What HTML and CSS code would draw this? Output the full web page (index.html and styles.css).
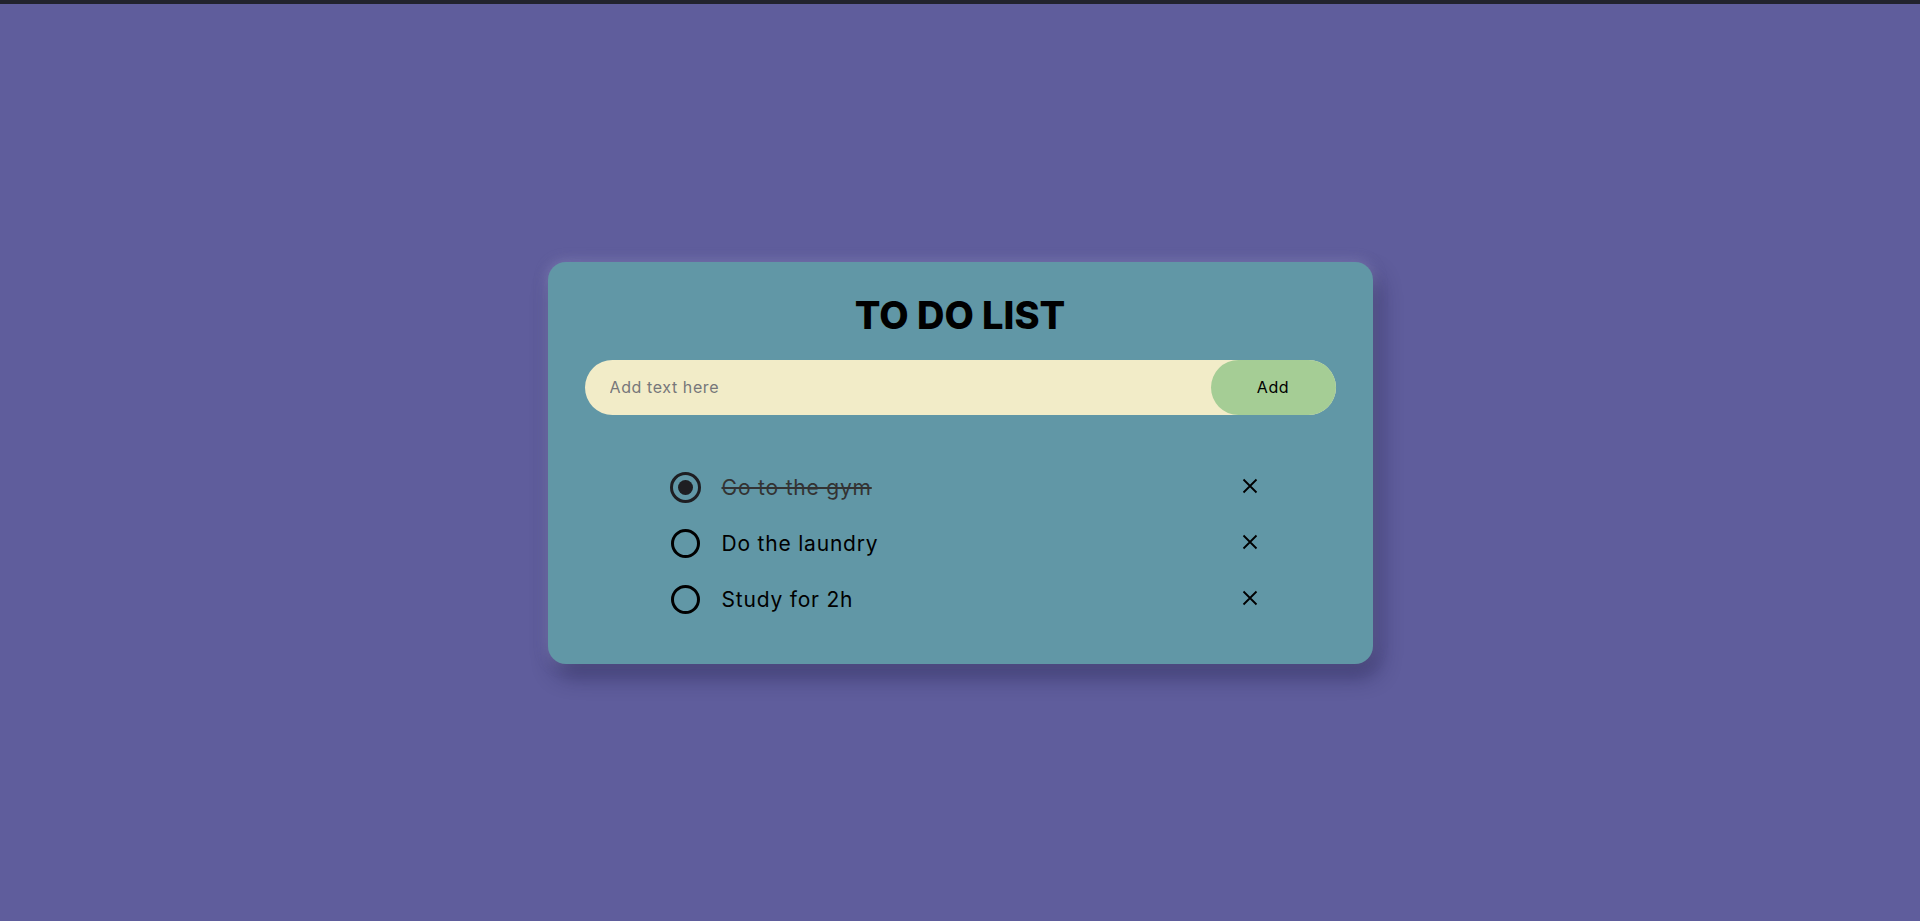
FILE: index.html
```html
<!DOCTYPE html>
<html lang="en">
<head>
<meta charset="utf-8">
<title>To Do List</title>
<link rel="stylesheet" href="styles.css">
</head>
<body>
<div class="topbar"></div>
<main class="stage">
  <section class="card">
    <h1 class="title">TO DO LIST</h1>
    <div class="entry">
      <input class="entry-input" type="text" placeholder="Add text here">
      <button class="entry-btn" type="button">Add</button>
    </div>
    <ul class="tasks">
      <li class="task done">
        <span class="check"><span class="dot"></span></span>
        <span class="task-text">Go to the gym</span>
        <span class="remove"><svg viewBox="0 0 16 16" width="16" height="16"><path d="M1.5 1.5 L14.5 14.5 M14.5 1.5 L1.5 14.5" stroke="#000" stroke-width="1.8" fill="none"/></svg></span>
      </li>
      <li class="task">
        <span class="check"></span>
        <span class="task-text">Do the laundry</span>
        <span class="remove"><svg viewBox="0 0 16 16" width="16" height="16"><path d="M1.5 1.5 L14.5 14.5 M14.5 1.5 L1.5 14.5" stroke="#000" stroke-width="1.8" fill="none"/></svg></span>
      </li>
      <li class="task">
        <span class="check"></span>
        <span class="task-text">Study for 2h</span>
        <span class="remove"><svg viewBox="0 0 16 16" width="16" height="16"><path d="M1.5 1.5 L14.5 14.5 M14.5 1.5 L1.5 14.5" stroke="#000" stroke-width="1.8" fill="none"/></svg></span>
      </li>
    </ul>
  </section>
</main>
</body>
</html>
```
FILE: styles.css
```css
* { box-sizing: border-box; }
html, body { margin: 0; padding: 0; }
body {
  background: #5f5d9c;
  font-family: "Inter", "Liberation Sans", sans-serif;
  height: 921px;
  overflow: hidden;
  display: flex;
  flex-direction: column;
}
.topbar { height: 4px; background: #22232e; flex: none; }
.stage {
  flex: 1;
  display: flex;
  align-items: center;
  justify-content: center;
}
.card {
  width: 825px;
  background: #6197a6;
  border-radius: 18px;
  padding: 28px 37px 36px;
  box-shadow: 6px 12px 22px rgba(20, 18, 60, 0.45), 0 0 14px rgba(200, 200, 240, 0.35);
}
.title {
  margin: 0;
  height: 50px;
  line-height: 50px;
  text-align: center;
  font-size: 38px;
  font-weight: 800;
  color: #000;
  letter-spacing: 0;
}
.entry {
  margin-top: 20px;
  height: 55px;
  display: flex;
  background: #f2ecc8;
  border-radius: 28px;
}
.entry-input {
  flex: 1;
  border: none;
  outline: none;
  background: transparent;
  padding: 0 0 0 25px;
  font-family: inherit;
  font-size: 16px;
  letter-spacing: 0.6px;
  color: #222;
}
.entry-input::placeholder { color: #77777a; }
.entry-btn {
  width: 125px;
  border: none;
  border-radius: 28px;
  background: #a5cd95;
  font-family: inherit;
  font-size: 16px;
  letter-spacing: 0.6px;
  color: #000;
  cursor: pointer;
}
.tasks {
  list-style: none;
  margin: 45px 0 0;
  padding: 0 78px 0 86px;
}
.task {
  height: 56px;
  display: flex;
  align-items: center;
}
.check {
  width: 29px;
  height: 29px;
  border: 3px solid #000;
  border-radius: 50%;
  flex: none;
  display: flex;
  align-items: center;
  justify-content: center;
}
.done .check { width: 31px; height: 31px; border-color: #1e1e22; margin-left: -1px; margin-right: -1px; }
.dot { width: 15px; height: 15px; border-radius: 50%; background: #1e1e22; }
.task-text {
  flex: 1;
  margin-left: 22px;
  font-size: 21px;
  letter-spacing: 0.8px;
  color: #000;
}
.done .task-text { color: #333; text-decoration: line-through; }
.remove {
  width: 16px;
  height: 16px;
  margin-bottom: 4px;
  display: flex;
}
```
